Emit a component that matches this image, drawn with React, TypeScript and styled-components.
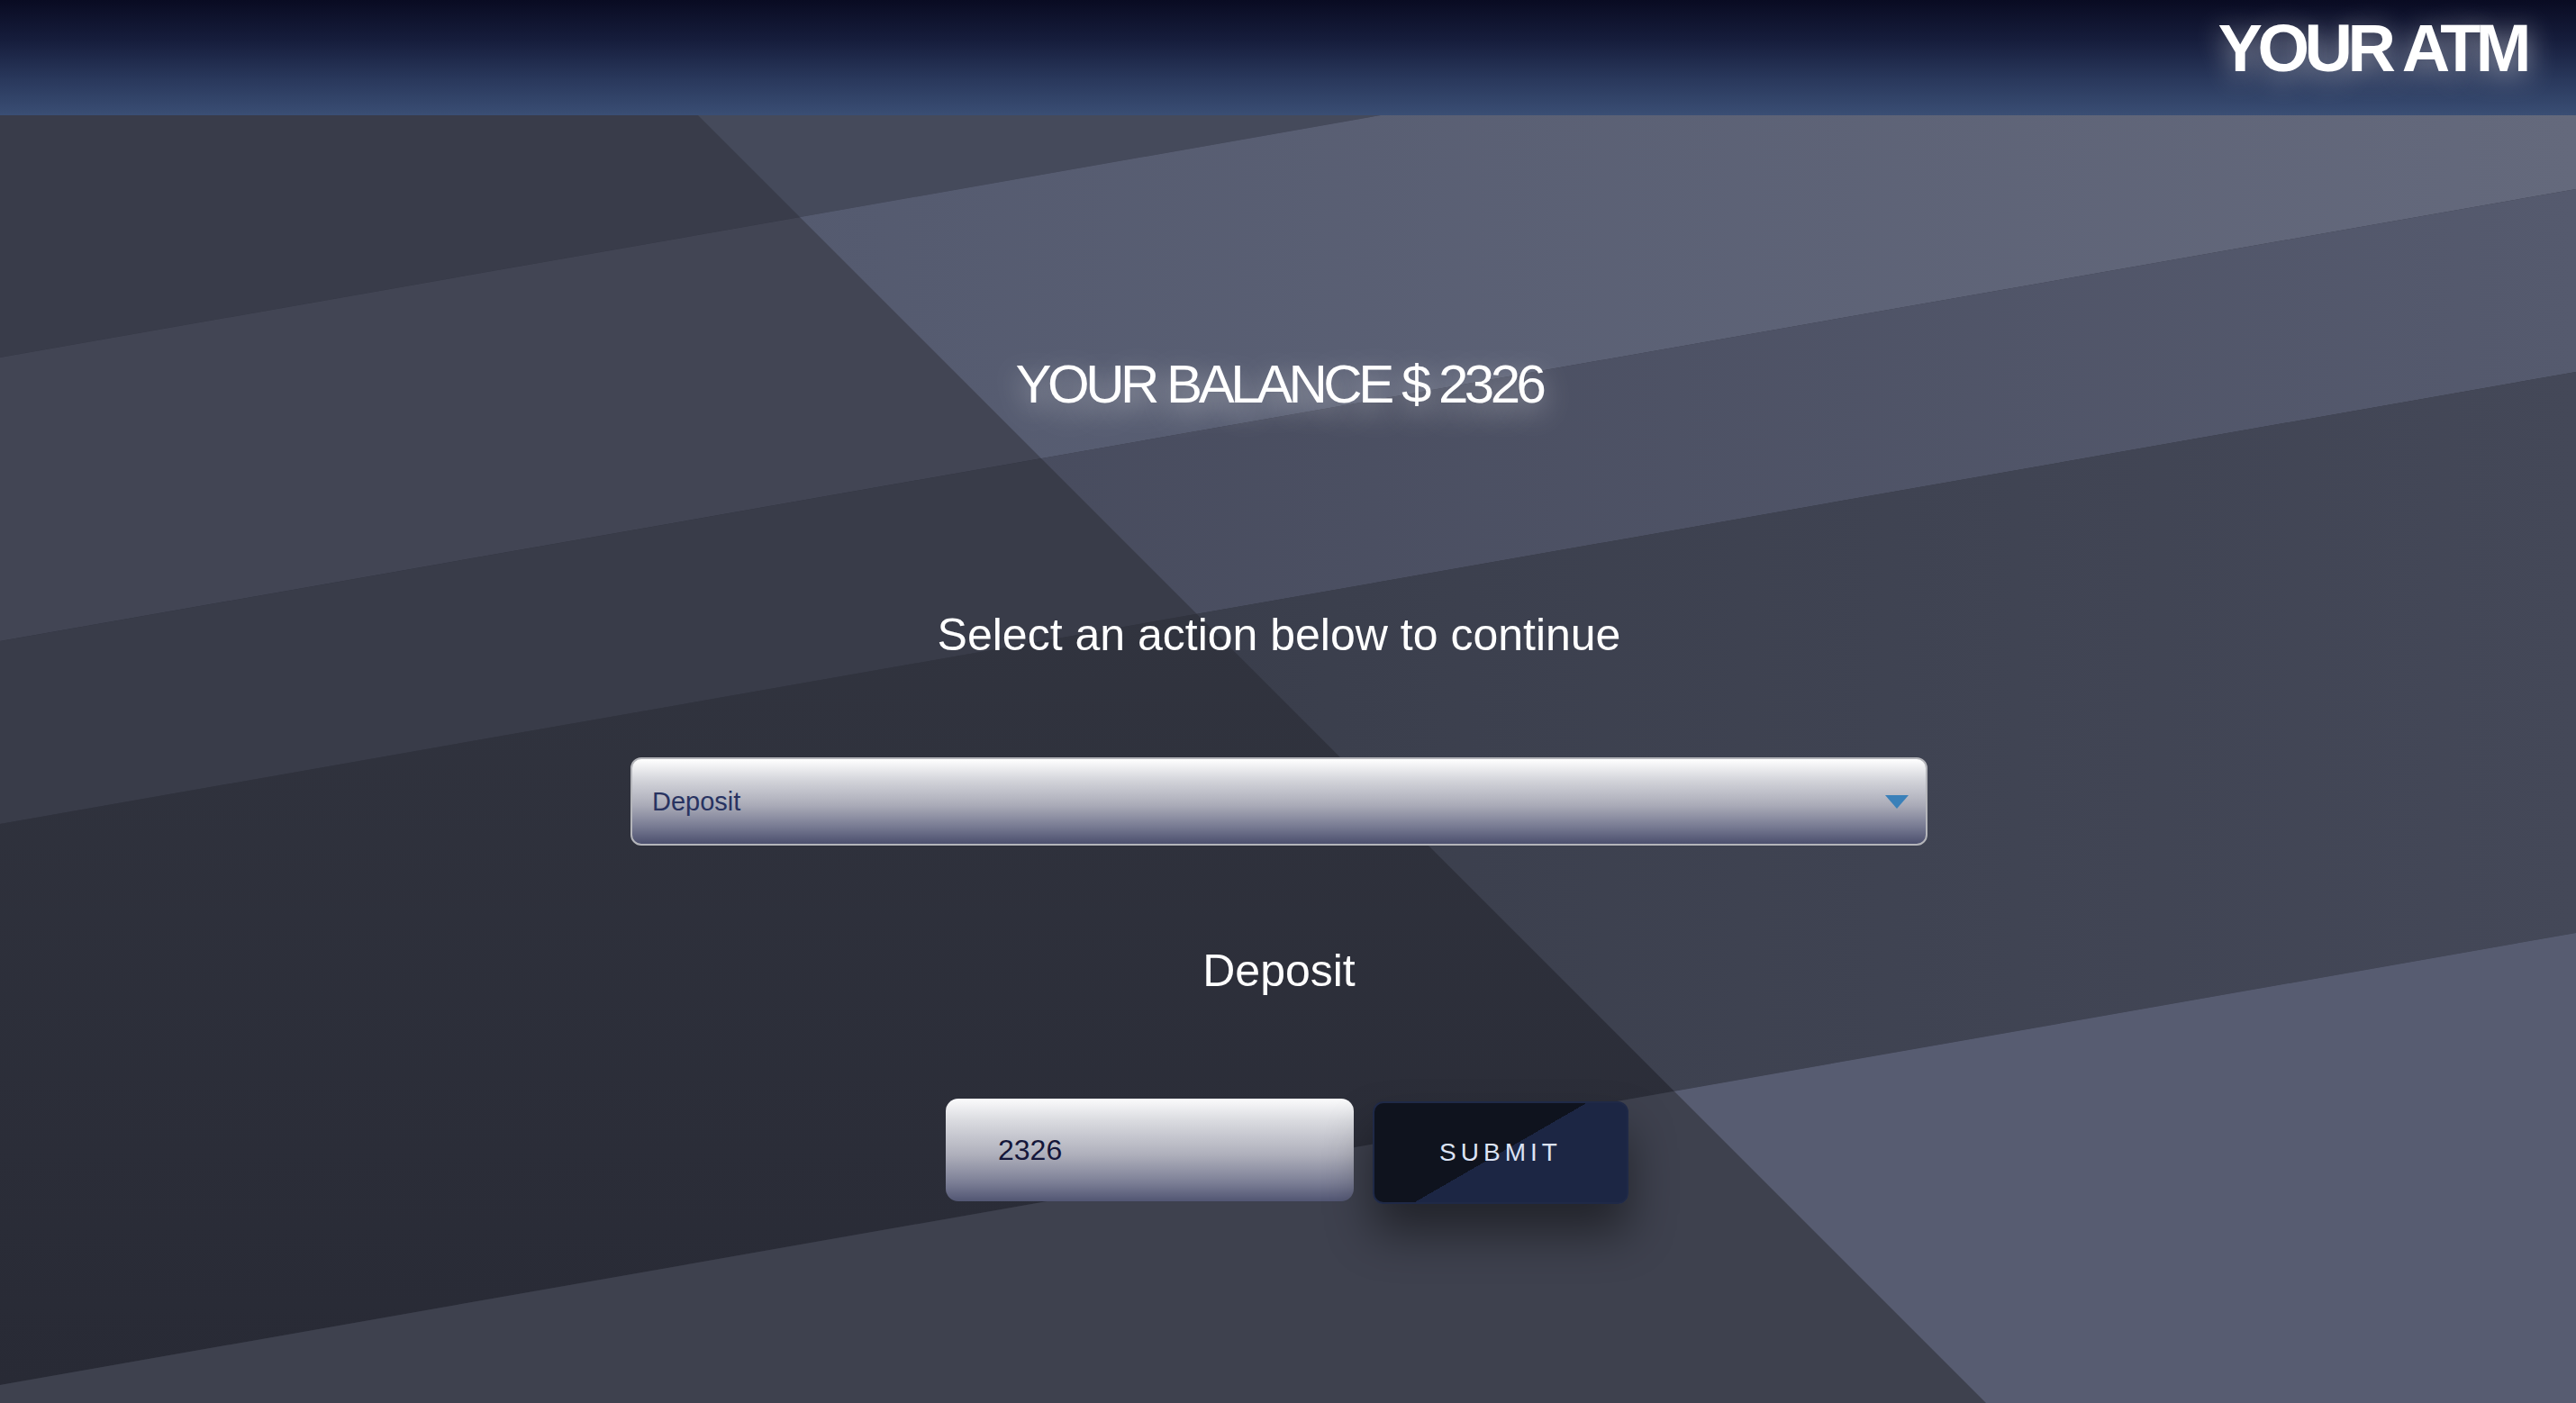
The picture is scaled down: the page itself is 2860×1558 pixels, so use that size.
import React from 'react';
import styled, { createGlobalStyle } from 'styled-components';

const GlobalStyle = createGlobalStyle`
  html, body { margin: 0; padding: 0; height: 100%; }
  body {
    font-family: "Liberation Sans", Arial, Helvetica, sans-serif;
    background: #30333e;
    overflow: hidden;
  }
  #root { min-height: 100vh; }
  * { box-sizing: border-box; }
`;

const Page = styled.div`
  display: flex;
  flex-direction: column;
  min-height: 100vh;
`;

const Header = styled.header`
  flex: none;
  height: 128px;
  display: flex;
  justify-content: flex-end;
  align-items: flex-start;
  padding: 17px 55px 0 0;
  background: linear-gradient(to bottom, #090b22 0%, #161d3c 35%, #2a395d 70%, #3a4e74 100%);
`;

const Brand = styled.h1`
  margin: 0;
  font-size: 74px;
  line-height: 1;
  font-weight: 700;
  letter-spacing: -5.5px;
  color: #ffffff;
  text-shadow: 0 6px 30px rgba(255, 255, 255, 0.55);
`;

const Main = styled.main`
  position: relative;
  flex: 1;
  overflow: hidden;
`;

const Backdrop = styled.svg`
  position: absolute;
  inset: 0;
  width: 100%;
  height: 100%;
  display: block;
  z-index: 0;
`;

const Column = styled.div`
  position: relative;
  z-index: 1;
  display: flex;
  flex-direction: column;
  align-items: center;
  padding: 269px 20px 0 0;
`;

const Balance = styled.h2`
  margin: 0;
  font-size: 60px;
  line-height: 1;
  font-weight: 400;
  letter-spacing: -4.5px;
  color: #ffffff;
  text-shadow: 0 10px 30px rgba(255, 255, 255, 0.5);
`;

const Prompt = styled.p`
  margin: 223px 0 0;
  font-size: 50px;
  line-height: 1;
  color: #ffffff;
`;

const SelectWrap = styled.div`
  position: relative;
  width: 1440px;
  margin-top: 111px;
`;

const Select = styled.select`
  appearance: none;
  -webkit-appearance: none;
  display: block;
  width: 100%;
  height: 98px;
  margin: 0;
  padding: 0 60px 0 22px;
  border: 2px solid #b4b5ba;
  border-radius: 12px;
  font-family: "Liberation Sans", Arial, sans-serif;
  font-size: 29px;
  color: #283361;
  background: linear-gradient(to bottom, #ffffff 0%, #d3d4da 25%, #a9aab7 55%, #777a92 80%, #4c506e 100%);
  outline: none;
`;

const Arrow = styled.svg`
  position: absolute;
  right: 21px;
  top: 42px;
  width: 26px;
  height: 15px;
  pointer-events: none;
`;

const Heading = styled.h3`
  margin: 114px 0 0;
  font-size: 50px;
  line-height: 1;
  font-weight: 400;
  color: #ffffff;
`;

const FormRow = styled.form`
  display: flex;
  align-items: flex-start;
  gap: 21px;
  margin-top: 117px;
  padding-left: 18px;
`;

const AmountInput = styled.input`
  width: 453px;
  height: 114px;
  border: none;
  border-radius: 14px;
  padding: 0 0 0 58px;
  font-family: "Liberation Sans", Arial, sans-serif;
  font-size: 32px;
  color: #14163a;
  background: linear-gradient(to bottom, #fbfbfc 0%, #d9dadf 22%, #aeafbb 55%, #7b7e95 82%, #525673 100%);
  outline: none;
`;

const SubmitButton = styled.button`
  width: 284px;
  height: 114px;
  margin-top: 3px;
  border: 2px solid #1f2947;
  border-radius: 12px;
  padding: 0;
  font-family: "Liberation Sans", Arial, sans-serif;
  font-size: 28px;
  letter-spacing: 5px;
  color: #dce3f5;
  background: linear-gradient(150deg, #0f131e 50%, #1c2644 50%);
  box-shadow: 0 32px 52px rgba(0, 0, 0, 0.45);
  cursor: pointer;
`;

const bands = {
  A: '0,0 1533,0 0,269',
  B: '0,269 1533,0 2860,0 2860,82 0,584',
  C: '0,584 2860,82 2860,285 0,787',
  D: '0,787 2860,285 2860,908 0,1410',
  E: '0,1410 2860,908 2860,1430 0,1430',
};

function Background() {
  return (
    <Backdrop viewBox="0 0 2860 1430" preserveAspectRatio="none" aria-hidden="true">
      <defs>
        <clipPath id="rightSide">
          <polygon points="775,0 2860,0 2860,1430 2205,1430" />
        </clipPath>
        <linearGradient id="leftD" x1="0" y1="0" x2="0" y2="1">
          <stop offset="0" stopColor="#343742" />
          <stop offset="1" stopColor="#282a35" />
        </linearGradient>
        <linearGradient id="rightB" x1="0" y1="0" x2="1" y2="0">
          <stop offset="0.3" stopColor="#545a6f" />
          <stop offset="1" stopColor="#64697c" />
        </linearGradient>
        <linearGradient id="rightC" x1="0" y1="0" x2="1" y2="0">
          <stop offset="0.3" stopColor="#464a5c" />
          <stop offset="1" stopColor="#555a6e" />
        </linearGradient>
        <linearGradient id="rightD" x1="0" y1="0" x2="1" y2="0">
          <stop offset="0.3" stopColor="#373b48" />
          <stop offset="1" stopColor="#444858" />
        </linearGradient>
      </defs>
      <polygon points={bands.A} fill="#393c4a" />
      <polygon points={bands.B} fill="#424554" />
      <polygon points={bands.C} fill="#393c49" />
      <polygon points={bands.D} fill="url(#leftD)" />
      <polygon points={bands.E} fill="#3e414e" />
      <g clipPath="url(#rightSide)">
        <polygon points={bands.A} fill="#454a5b" />
        <polygon points={bands.B} fill="url(#rightB)" />
        <polygon points={bands.C} fill="url(#rightC)" />
        <polygon points={bands.D} fill="url(#rightD)" />
        <polygon points={bands.E} fill="#575c71" />
      </g>
    </Backdrop>
  );
}

export default function App() {
  const [action, setAction] = React.useState('Deposit');
  const [amount, setAmount] = React.useState('2326');

  return (
    <Page>
      <GlobalStyle />
      <Header>
        <Brand>YOUR ATM</Brand>
      </Header>
      <Main>
        <Background />
        <Column>
          <Balance>YOUR BALANCE $ 2326</Balance>
          <Prompt>Select an action below to continue</Prompt>
          <SelectWrap>
            <Select value={action} onChange={(e) => setAction(e.target.value)}>
              <option value="Deposit">Deposit</option>
              <option value="Withdraw">Withdraw</option>
            </Select>
            <Arrow viewBox="0 0 26 15">
              <polygon points="0,0 26,0 13,15" fill="#3a80b9" />
            </Arrow>
          </SelectWrap>
          <Heading>{action}</Heading>
          <FormRow onSubmit={(e) => e.preventDefault()}>
            <AmountInput value={amount} onChange={(e) => setAmount(e.target.value)} />
            <SubmitButton type="submit">SUBMIT</SubmitButton>
          </FormRow>
        </Column>
      </Main>
    </Page>
  );
}
